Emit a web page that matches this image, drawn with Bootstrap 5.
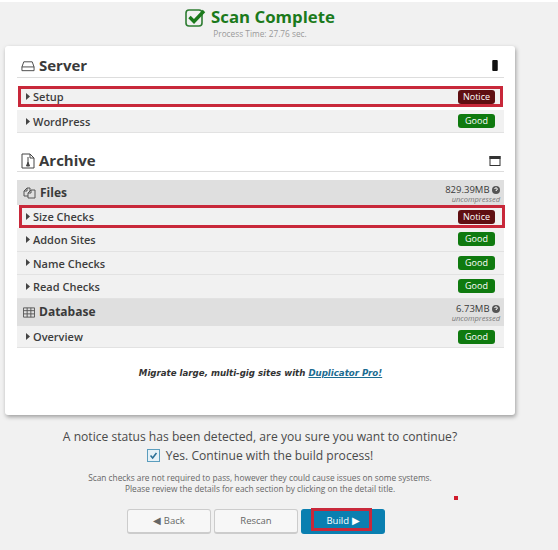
<!DOCTYPE html>
<html lang="en">

<head>
    <meta charset="UTF-8">
    <meta name="viewport" content="width=device-width, initial-scale=1.0">
    <title>Scan Complete</title>
    <link href="https://cdn.jsdelivr.net/npm/bootstrap@5.3.0/dist/css/bootstrap.min.css" rel="stylesheet">
    <style>
        body {
            background: #f1f1f1;
            border-top: 2px solid #fff;
            font-family: "Open Sans", "Noto Sans", sans-serif;
            color: #444;
            height: 550px;
            overflow: hidden;
            position: relative;
        }

        .page-wrap {
            width: 520px;
            padding: 0 5px;
        }

        .scan-title {
            margin-top: 3px;
            height: 24px;
            color: #1b7a1c;
            font-size: 16.8px;
            font-weight: 700;
            line-height: 24px;
        }

        .scan-time {
            color: #999;
            font-size: 8.3px;
            line-height: 10px;
            height: 17px;
        }

        .scan-panel {
            height: 369px;
            background: #fff;
            border-radius: 3px;
            box-shadow: 1px 2px 4px rgba(0, 0, 0, .35);
            padding: 0 11px 0 12px;
        }

        .sec-head {
            border-bottom: 1px solid #ddd;
            font-size: 15px;
            font-weight: 700;
            color: #3a3a3a;
            padding: 0 3px 0 4px;
        }

        .sec-server {
            height: 32px;
            padding-top: 8px;
        }

        .sec-archive {
            height: 22px;
            margin-top: 17px;
        }

        .check-row {
            height: 23.5px;
            background: #f1f1f1;
            border-bottom: 1px solid #e2e2e2;
            font-size: 11px;
            font-weight: 600;
            color: #3d3d3d;
            padding: 0 9px;
        }

        .row-label {
            margin-top: 2px;
        }

        .row-caret {
            margin-right: 3px;
        }

        .row-setup {
            height: 21px;
            margin: 8px 1px 0 1px;
            padding: 0 8px;
            outline: 3px solid #c8283a;
            outline-offset: -3px;
            border-bottom: 0;
        }

        .row-wordpress {
            height: 23px;
            margin-top: 3px;
        }

        .row-size {
            height: 23px;
            margin: 0 -1px 0 2px;
            padding: 0 10px 0 7px;
            outline: 3px solid #c8283a;
            outline-offset: -3px;
            border-bottom: 0;
        }

        .row-overview {
            height: 22px;
        }

        .group-head {
            background: #dfdfdf;
            font-size: 12px;
            font-weight: 700;
            color: #3a3a3a;
            padding: 0 4px 0 6px;
        }

        .group-files {
            height: 25px;
            margin-top: 8px;
        }

        .group-db {
            height: 27.5px;
        }

        .icon-server-side {
            margin-right: 3px;
        }

        .size-note {
            padding-top: 3px;
            font-size: 9.5px;
            font-weight: 400;
            line-height: 10px;
            text-align: right;
        }

        .size-note svg {
            vertical-align: -1px;
        }

        .size-note em {
            display: block;
            font-size: 7.5px;
            color: #777;
            line-height: 9px;
        }

        .status-tag {
            width: 37px;
            height: 14px;
            line-height: 14px;
            border-radius: 3px;
            color: #fff;
            font-size: 9px;
            font-weight: 400;
            text-align: center;
        }

        .tag-good {
            background: #0f7a0f;
        }

        .tag-notice {
            background: #5f0f12;
        }

        .promo-line {
            margin-top: 19px;
            font-size: 8.65px;
            font-weight: 700;
            font-style: italic;
            font-family: "DejaVu Sans", sans-serif;
            color: #333;
        }

        .promo-line a {
            color: #1b6c91;
        }

        .confirm-line {
            margin-top: 13px;
            font-size: 12.1px;
            line-height: 17px;
            color: #4a4a4a;
        }

        .confirm-yes {
            margin-top: 2px;
            gap: 6px;
        }

        .confirm-check {
            width: 13px;
            height: 13px;
            background: #e6f1f7;
            border: 1px solid #5b9dbd;
        }

        .fine-print {
            font-size: 8.3px;
            line-height: 11px;
            color: #666;
            margin-top: 8px;
        }

        .step-row {
            margin-top: 14.5px;
            padding-right: 8px;
            gap: 3px;
        }

        .step-btn {
            width: 84px;
            height: 25px;
            font-size: 9.5px;
            line-height: 21px;
            padding: 0;
            border-radius: 3px;
            background: #f7f7f7;
            border: 1px solid #ccc;
            border-bottom-width: 2px;
            color: #666;
        }

        .step-build {
            position: relative;
            background: #0a7fb0;
            border-color: #0a7fb0;
            color: #fff;
        }

        .build-mark {
            position: absolute;
            left: 9px;
            top: -2px;
            width: 61px;
            height: 23px;
            border: 3px solid #c8283a;
        }

        .red-dot {
            position: absolute;
            left: 454px;
            top: 494px;
            width: 4px;
            height: 4px;
            background: #d01c2c;
        }
    </style>
</head>

<body>
    <div class="page-wrap">
        <div class="scan-title d-flex justify-content-center align-items-center gap-1">
            <svg width="22" height="21" viewBox="0 0 22 21" fill="none">
                <rect x="1" y="3" width="16" height="16" rx="3" stroke="#2e7d32" stroke-width="1.6" />
                <path d="M4.5 10 L9 14.5 L19 4" stroke="#1b7a1c" stroke-width="3.4" />
            </svg>
            <span>Scan Complete</span>
        </div>
        <div class="scan-time text-center">Process Time: 27.76 sec.</div>

        <div class="scan-panel">
            <div class="sec-head sec-server d-flex align-items-center">
                <svg class="me-1" width="14" height="12" viewBox="0 0 15 12" fill="none" stroke="#444">
                    <path d="M1 7 L3 1.5 H12 L14 7 V11 H1 Z M1 7 H14" />
                </svg>
                <span class="flex-grow-1">Server</span>
                <svg class="icon-server-side" width="6" height="11" viewBox="0 0 6 12">
                    <rect width="6" height="12" rx="1" fill="#111" />
                </svg>
            </div>
            <div class="check-row row-setup d-flex align-items-center">
                <svg class="row-caret" width="4" height="7" viewBox="0 0 4 7"><path d="M0 0 L4 3.5 L0 7 Z" fill="#444" /></svg>
                <span class="row-label flex-grow-1">Setup</span>
                <span class="status-tag tag-notice">Notice</span>
            </div>
            <div class="check-row row-wordpress d-flex align-items-center">
                <svg class="row-caret" width="4" height="7" viewBox="0 0 4 7"><path d="M0 0 L4 3.5 L0 7 Z" fill="#444" /></svg>
                <span class="row-label flex-grow-1">WordPress</span>
                <span class="status-tag tag-good">Good</span>
            </div>

            <div class="sec-head sec-archive d-flex align-items-center">
                <svg class="me-1" width="14" height="16" viewBox="0 0 14 16" fill="none" stroke="#444">
                    <path d="M1 1 H9 L13 5 V15 H1 Z M9 1 V5 H13" />
                    <path d="M7 4 V9 M5.5 13 L7 9 L8.5 13 Z" fill="#444" />
                </svg>
                <span class="flex-grow-1">Archive</span>
                <svg width="12" height="10" viewBox="0 0 11 10" fill="none" stroke="#333">
                    <rect x=".5" y=".5" width="10" height="9" />
                    <rect x=".5" y=".5" width="10" height="2" fill="#333" />
                </svg>
            </div>

            <div class="group-head group-files d-flex align-items-center">
                <svg class="me-1" width="13" height="13" viewBox="0 0 13 13" fill="none" stroke="#555">
                    <path d="M1 5 L4 2 H7 V5 M1 5 H4 V2 M1 5 V10 H5" />
                    <path d="M5 7 L8 4 H12 V12 H5 Z M5 7 H8 V4" />
                </svg>
                <span class="flex-grow-1">Files</span>
                <div class="size-note">829.39MB
                    <svg width="8" height="8" viewBox="0 0 8 8"><circle cx="4" cy="4" r="4" fill="#555" /><path d="M2.7 3 A1.3 1.3 0 1 1 4 4.4 V5" stroke="#fff" fill="none" /></svg>
                    <em>uncompressed</em>
                </div>
            </div>
            <div class="check-row row-size d-flex align-items-center">
                <svg class="row-caret" width="4" height="7" viewBox="0 0 4 7"><path d="M0 0 L4 3.5 L0 7 Z" fill="#444" /></svg>
                <span class="row-label flex-grow-1">Size Checks</span>
                <span class="status-tag tag-notice">Notice</span>
            </div>
            <div class="check-row d-flex align-items-center">
                <svg class="row-caret" width="4" height="7" viewBox="0 0 4 7"><path d="M0 0 L4 3.5 L0 7 Z" fill="#444" /></svg>
                <span class="row-label flex-grow-1">Addon Sites</span>
                <span class="status-tag tag-good">Good</span>
            </div>
            <div class="check-row d-flex align-items-center">
                <svg class="row-caret" width="4" height="7" viewBox="0 0 4 7"><path d="M0 0 L4 3.5 L0 7 Z" fill="#444" /></svg>
                <span class="row-label flex-grow-1">Name Checks</span>
                <span class="status-tag tag-good">Good</span>
            </div>
            <div class="check-row d-flex align-items-center">
                <svg class="row-caret" width="4" height="7" viewBox="0 0 4 7"><path d="M0 0 L4 3.5 L0 7 Z" fill="#444" /></svg>
                <span class="row-label flex-grow-1">Read Checks</span>
                <span class="status-tag tag-good">Good</span>
            </div>
            <div class="group-head group-db d-flex align-items-center">
                <svg class="me-1" width="12" height="11" viewBox="0 0 13 11" fill="none" stroke="#555">
                    <path d="M.5 .5 H12.5 V10.5 H.5 Z M.5 3.5 H12.5 M.5 7 H12.5 M4.5 .5 V10.5 M8.5 .5 V10.5" />
                </svg>
                <span class="flex-grow-1">Database</span>
                <div class="size-note">6.73MB
                    <svg width="8" height="8" viewBox="0 0 8 8"><circle cx="4" cy="4" r="4" fill="#555" /><path d="M2.7 3 A1.3 1.3 0 1 1 4 4.4 V5" stroke="#fff" fill="none" /></svg>
                    <em>uncompressed</em>
                </div>
            </div>
            <div class="check-row row-overview d-flex align-items-center">
                <svg class="row-caret" width="4" height="7" viewBox="0 0 4 7"><path d="M0 0 L4 3.5 L0 7 Z" fill="#444" /></svg>
                <span class="row-label flex-grow-1">Overview</span>
                <span class="status-tag tag-good">Good</span>
            </div>

            <div class="promo-line text-center">Migrate large, multi-gig sites with <a href="#">Duplicator Pro!</a></div>
        </div>

        <div class="confirm-line text-center">A notice status has been detected, are you sure you want to continue?</div>
        <div class="confirm-line confirm-yes d-flex justify-content-center align-items-center">
            <svg class="confirm-check" viewBox="0 0 13 13"><path d="M3 6.5 L5.5 9.5 L10 3.5" fill="none" stroke="#2a6f96" stroke-width="1.8" /></svg>
            <span>Yes. Continue with the build process!</span>
        </div>
        <div class="fine-print text-center">Scan checks are not required to pass, however they could cause issues on some systems.<br>Please review the details for each section by clicking on the detail title.</div>

        <div class="step-row d-flex justify-content-center">
            <button type="button" class="btn step-btn">&#9664; Back</button>
            <button type="button" class="btn step-btn">Rescan</button>
            <button type="button" class="btn step-btn step-build">Build &#9654;<span class="build-mark"></span></button>
        </div>
    </div>
    <div class="red-dot"></div>

    <script src="https://cdn.jsdelivr.net/npm/bootstrap@5.3.0/dist/js/bootstrap.bundle.min.js"></script>
</body>

</html>
